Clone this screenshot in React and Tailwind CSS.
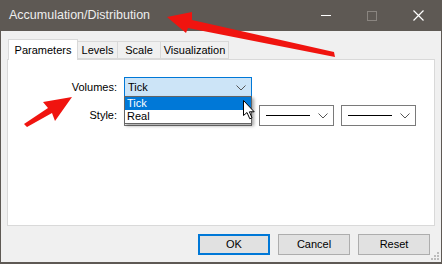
import React from "react";

const font = { fontFamily: '"Liberation Sans", Arial, sans-serif' };

function Chevron() {
  return (
    <svg width="10" height="6" viewBox="0 0 10 6">
      <path d="M0.5 0.5 L5 5 L9.5 0.5" fill="none" stroke="#555" strokeWidth="1" />
    </svg>
  );
}

function LineSelect() {
  return (
    <div className="w-[75px] h-[21px] border border-[#7a7a7a] bg-white flex items-center pl-[6px] pr-[5px]">
      <div className="w-[44px] h-[1px] bg-black" />
      <div className="flex-1" />
      <Chevron />
    </div>
  );
}

function Arrows() {
  return (
    <svg className="absolute left-0 top-0 pointer-events-none" width="442" height="264">
      <polygon points="167,17 192,12 192,20 334,52 335,57 188,28 186,33" fill="#f0140f" />
      <polygon points="72,97 55,121 52,113 27,127 24,124 48,108 43,102" fill="#f0140f" />
    </svg>
  );
}

function Cursor() {
  return (
    <svg className="absolute left-[243px] top-[100px]" width="14" height="21" viewBox="0 0 14 21">
      <path
        d="M0.5 0.5 L0.5 15.5 L4 12.5 L6.8 18.8 L9 17.8 L6.4 11.8 L11.2 11.8 Z"
        fill="white"
        stroke="black"
        strokeWidth="1"
        strokeLinejoin="round"
      />
    </svg>
  );
}

export default function App() {
  return (
    <div className="relative w-[442px] h-[264px] bg-[#5e5954] px-[1px] overflow-hidden" style={font}>
      {/* Title bar */}
      <div className="h-[31px] flex items-center text-[#eeeeee]">
        <span className="pl-[8px] text-[12.5px]">Accumulation/Distribution</span>
        <div className="flex-1" />
        <div className="w-[46px] h-[31px] flex items-center justify-center">
          <div className="w-[10px] h-[1px] bg-white" />
        </div>
        <div className="w-[46px] h-[31px] flex items-center justify-center">
          <div className="w-[10px] h-[10px] border border-[#8a8580]" />
        </div>
        <div className="w-[46px] h-[31px] flex items-center justify-center">
          <svg width="11" height="11" viewBox="0 0 11 11">
            <path d="M0.5 0.5 L10.5 10.5 M10.5 0.5 L0.5 10.5" stroke="white" strokeWidth="1.2" />
          </svg>
        </div>
      </div>

      {/* Body */}
      <div className="relative h-[231px] bg-[#f0f0f0] text-[11px] text-black">
        {/* Tabs */}
        <div className="flex items-end pl-[7px] pt-[7px] h-[28px]">
          <div className="relative z-10 w-[70px] h-[21px] bg-white border border-b-0 border-[#d9d9d9] flex items-center justify-center -mb-[1px]">
            Parameters
          </div>
          <div className="w-[40px] h-[18px] border border-l-0 border-[#d9d9d9] flex items-center justify-center">Levels</div>
          <div className="w-[43px] h-[18px] border border-l-0 border-[#d9d9d9] flex items-center justify-center">Scale</div>
          <div className="w-[68px] h-[18px] border border-l-0 border-[#d9d9d9] flex items-center justify-center">Visualization</div>
        </div>

        {/* Panel */}
        <div className="ml-[6px] w-[428px] h-[167px] bg-white border border-[#d9d9d9] pt-[17px]">
          <div className="grid grid-cols-[109px_auto] gap-x-[7px] gap-y-[7px] items-center">
            <div className="text-right">Volumes:</div>
            <div className="w-[128px] h-[21px] border border-[#0078d7] bg-[#cce4f7] flex items-center pl-[3px] pr-[5px]">
              <span>Tick</span>
              <div className="flex-1" />
              <Chevron />
            </div>
            <div className="text-right">Style:</div>
            <div className="flex gap-[7px]">
              <div className="w-[128px] h-[21px] border border-[#7a7a7a] bg-white" />
              <LineSelect />
              <LineSelect />
            </div>
          </div>
        </div>

        {/* Buttons */}
        <div className="flex justify-end gap-[8px] pr-[11px] pt-[8px]">
          <div className="w-[72px] h-[21px] bg-[#e1e1e1] border-2 border-[#0078d7] flex items-center justify-center">OK</div>
          <div className="w-[72px] h-[21px] bg-[#e1e1e1] border border-[#adadad] flex items-center justify-center">Cancel</div>
          <div className="w-[72px] h-[21px] bg-[#e1e1e1] border border-[#adadad] flex items-center justify-center">Reset</div>
        </div>

        {/* Size grip */}
        <svg className="absolute right-[1px] bottom-[1px]" width="9" height="9" viewBox="0 0 9 9">
          <rect x="6" y="0" width="2" height="2" fill="#bcbcbc" />
          <rect x="3" y="3" width="2" height="2" fill="#bcbcbc" />
          <rect x="6" y="3" width="2" height="2" fill="#bcbcbc" />
          <rect x="0" y="6" width="2" height="2" fill="#bcbcbc" />
          <rect x="3" y="6" width="2" height="2" fill="#bcbcbc" />
          <rect x="6" y="6" width="2" height="2" fill="#bcbcbc" />
        </svg>
      </div>

      {/* Dropdown list */}
      <div className="absolute left-[124px] top-[96px] w-[128px] border border-[#646464] bg-white text-[11px] shadow-[2px_2px_3px_rgba(0,0,0,0.35)]">
        <div className="h-[13px] bg-[#0078d7] text-white pl-[2px] leading-[13px]">Tick</div>
        <div className="h-[13px] pl-[2px] leading-[13px]">Real</div>
      </div>

      <Cursor />
      <Arrows />
    </div>
  );
}
